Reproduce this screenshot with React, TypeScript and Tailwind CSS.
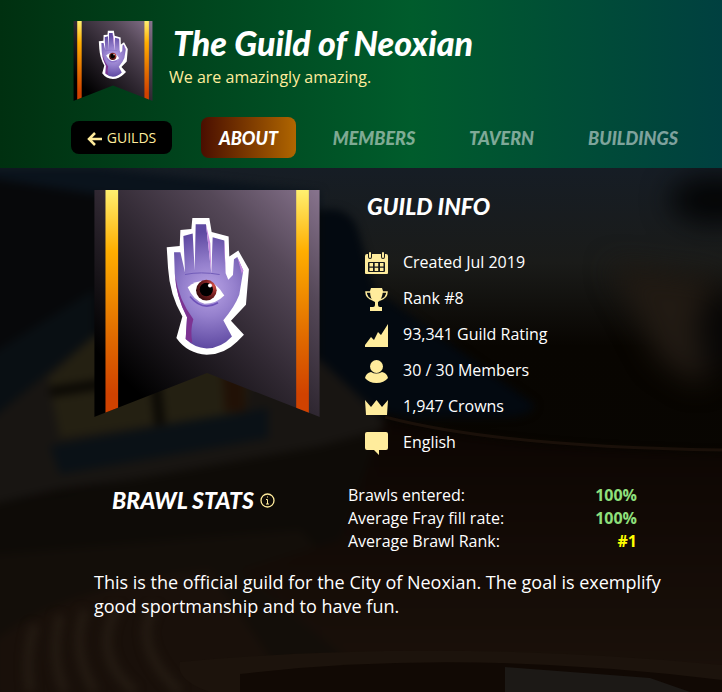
import type { ReactNode } from 'react';

const tabs = [
  { label: 'MEMBERS', width: 'w-[118px]' },
  { label: 'TAVERN', width: 'w-[99px]' },
  { label: 'BUILDINGS', width: 'w-[126px]' },
];

const stats = [
  { label: 'Brawls entered:', value: '100%', color: 'text-[#8fe07c]' },
  { label: 'Average Fray fill rate:', value: '100%', color: 'text-[#8fe07c]' },
  { label: 'Average Brawl Rank:', value: '#1', color: 'text-[#ffff00]' },
];

const info: { text: string; icon: ReactNode }[] = [
  {
    text: 'Created Jul 2019',
    icon: (
      <>
        <path d="M0 4Q0 2 2 2H3V5Q3 7 5 7T7 5V2H16V5Q16 7 18 7T20 5V2H21Q23 2 23 4V21Q23 22 22 22H1Q0 22 0 21Z" />
        <rect x="4" y="0" width="2" height="6" rx="1" />
        <rect x="17" y="0" width="2" height="6" rx="1" />
        <rect x="3" y="10" width="17" height="10" rx="1" fill="#17191a" />
        <path d="M4.500 11h3.500v3.500H4.500zM9.700 11h3.500v3.500H9.700zM15 11h3.500v3.500H15zM4.500 15.700h3.500v3.300H4.500zM9.700 15.700h3.500v3.300H9.700zM15 15.700h3.500v3.300H15z" />
      </>
    ),
  },
  {
    text: 'Rank #8',
    icon: (
      <>
        <path d="M6 0h11l1 3q-1 9-5 11v3q0 2 2 2h2v4H5v-4h3q2 0 2-2v-3Q5 12 5 3z" />
        <path
          fill="none"
          stroke="currentColor"
          strokeWidth="1.5"
          d="M6 4H1q0 6 7 8M17 4h5q0 6-7 8"
        />
      </>
    ),
  },
  {
    text: '93,341 Guild Rating',
    icon: <path d="M0 23V21L6 13L9 16L13 8L16 11L23 0V23Z" />,
  },
  {
    text: '30 / 30 Members',
    icon: (
      <>
        <circle cx="11.500" cy="6.500" r="6.500" />
        <path d="M0 18Q1 13 6 12Q11 15 17 12Q22 13 23 18Q19 23 11.500 23T0 18Z" />
      </>
    ),
  },
  {
    text: '1,947 Crowns',
    icon: <path d="M0 4L6 11L11.500 4L17 11L23 4L22 19H1Z" />,
  },
  {
    text: 'English',
    icon: <path d="M2 0H21Q23 0 23 2V16Q23 18 21 18H14V23L9 18H2Q0 18 0 16V2Q0 0 2 0Z" />,
  },
];

function Crest({ id, className }: { id: string; className: string }) {
  return (
    <svg viewBox="30 30 678 682" className={className} role="img" aria-label="Guild crest">
      <defs>
        <linearGradient id={`${id}-cloth`} x1="0" y1="1" x2="1" y2="0">
          <stop offset="0.15" stopColor="#000000" />
          <stop offset="0.5" stopColor="#302832" />
          <stop offset="0.75" stopColor="#554858" />
          <stop offset="1" stopColor="#88748e" />
        </linearGradient>
        <linearGradient id={`${id}-gold`} x1="0" y1="0" x2="0" y2="1">
          <stop offset="0" stopColor="#fff070" />
          <stop offset="0.27" stopColor="#ffae00" />
          <stop offset="0.65" stopColor="#e06a00" />
          <stop offset="0.9" stopColor="#d04200" />
        </linearGradient>
        <radialGradient id={`${id}-skin`} gradientUnits="userSpaceOnUse" cx="375" cy="330" r="175">
          <stop offset="0" stopColor="#b9a4e6" />
          <stop offset="0.45" stopColor="#9580cd" />
          <stop offset="1" stopColor="#5f4aa2" />
        </radialGradient>
        <radialGradient id={`${id}-iris`} cx="0.8" cy="0.3" r="0.8">
          <stop offset="0" stopColor="#d9534c" />
          <stop offset="0.5" stopColor="#7c2222" />
          <stop offset="1" stopColor="#3c0d0e" />
        </radialGradient>
        <clipPath id={`${id}-shape`}>
          <path d="M30 30H708V712L369 580L30 712Z" />
        </clipPath>
      </defs>
      <g clipPath={`url(#${id}-shape)`}>
        <rect x="30" y="30" width="678" height="682" fill={`url(#${id}-cloth)`} />
        <rect x="64" y="30" width="38" height="682" fill={`url(#${id}-gold)`} />
        <rect x="637" y="30" width="38" height="682" fill={`url(#${id}-gold)`} />
      </g>
      <path
        fill="#ffffff"
        d="M325 114H376L383 156L434 170L436 230L463 212L495 268L486 375L441 423L480 465L460 485Q420 525 368 525Q310 522 277 475L295 410Q257 345 252 265L248 202L287 198L289 150L322 147Z"
      />
      <path
        fill={`url(#${id}-skin)`}
        d="M270 217H289L303 278L298 168L326 161L332 272L335 133H366L382 280L386 172L421 182L425 280L433 300L447 285L450 238L460 231L478 272L466 345Q452 382 418 421L444 470Q412 505 368 506Q330 504 305 478L309 412Q276 350 272 280Z"
      />
      <path fill="#7d3392" d="M305 478L309 412Q276 350 273 285Q284 360 328 418Q318 450 325 490Q314 486 305 478Z" />
      <path fill="#c98be0" d="M366 133L382 280L379 190ZM421 182L425 280L420 200ZM460 231L478 272L474 282Z" />
      <path fill="none" stroke="#705bb8" strokeWidth="3" d="M303 284Q350 274 407 284" />
      <path fill="none" stroke="#6d50b8" strokeWidth="5" d="M318 350Q355 396 402 369" />
      <path fill="#ffffff" d="M311 322Q335 303 362 303Q397 306 421 347Q396 372 362 372Q328 362 311 322Z" />
      <circle cx="367" cy="331" r="31" fill={`url(#${id}-iris)`} />
      <circle cx="367" cy="329" r="20" fill="#000000" />
      <circle cx="378" cy="317" r="6" fill="#ffffff" />
    </svg>
  );
}

/* Dim tavern interior behind the guild details */
function Backdrop() {
  return (
    <svg
      viewBox="0 168 722 524"
      preserveAspectRatio="xMidYMid slice"
      className="absolute inset-0 h-full w-full"
      aria-hidden="true"
    >
      <defs>
        <linearGradient id="room" x1="0" y1="0" x2="0" y2="1">
          <stop offset="0" stopColor="#161d25" />
          <stop offset="0.18" stopColor="#1a1b19" />
          <stop offset="0.34" stopColor="#080501" />
          <stop offset="1" stopColor="#080603" />
        </linearGradient>
        <linearGradient id="floor" x1="0" y1="0" x2="0" y2="1">
          <stop offset="0" stopColor="#0c0502" />
          <stop offset="1" stopColor="#1c120b" />
        </linearGradient>
        <filter id="soft" colorInterpolationFilters="sRGB">
          <feGaussianBlur stdDeviation="4" />
        </filter>
        <filter id="haze" x="-50%" y="-50%" width="200%" height="200%" colorInterpolationFilters="sRGB">
          <feGaussianBlur stdDeviation="14" />
        </filter>
      </defs>
      <rect y="168" width="722" height="524" fill="url(#room)" />
      <g filter="url(#haze)">
        <ellipse cx="715" cy="200" rx="46" ry="24" fill="#040506" />
        <path d="M610 265L722 280V340L700 385L660 360Z" fill="#211a13" />
        <ellipse cx="722" cy="330" rx="24" ry="40" fill="#080706" />
      </g>
      <g filter="url(#soft)">
        <path d="M-10 178L94 190L320 205V420L-10 430Z" fill="#07080a" />
        <path d="M-10 168H100L320 192V210L94 194L-10 178Z" fill="#0a131c" />
        <path d="M320 210Q350 205 358 230L375 290L535 405Q530 418 500 417L410 418L320 400Z" fill="#030910" />
        <path d="M-10 355L94 290V335L-10 420Z" fill="#090f13" />
        <path d="M-10 420L94 335L320 360L390 425L340 450L60 490L-10 505Z" fill="#181512" />
        <path d="M48 378L96 335L250 370L245 412L60 438Z" fill="#242012" />
        <path d="M222 370H245V412H225Z" fill="#211106" />
        <path d="M50 392L155 376L160 425" fill="none" stroke="#0a0804" strokeWidth="10" />
        <path d="M50 446L268 408V438L60 474Z" fill="#0a1116" />
        <path d="M-10 505L320 446L380 430L500 460V692H-10Z" fill="#0e0b07" />
        <path d="M-10 555L300 530L460 692H-10Z" fill="#130e09" />
        <path d="M385 420Q500 450 732 454V702H400L240 570L340 540Z" fill="url(#floor)" />
        <path d="M-5 640Q70 585 210 570L300 702H-5Z" fill="#19100a" />
      </g>
      <path d="M385 417Q500 447 722 450" fill="none" stroke="#1a1009" strokeWidth="3" />
      <g filter="url(#soft)">
        <path
          d="M30 692Q25 650 35 625M65 692Q50 660 60 615M95 692Q70 650 85 610M135 692Q90 655 118 605M180 692Q130 645 155 605"
          fill="none"
          stroke="#231a12"
          strokeWidth="10"
        />
      </g>
      <path d="M180 662Q440 638 722 665V692H210Q175 680 180 662Z" fill="#1c130c" />
      <path d="M240 674Q460 648 722 680V692H240Z" fill="#110904" />
      <path d="M505 667L650 678L690 692H505Z" fill="#1c1916" />
    </svg>
  );
}

export default function App() {
  return (
    <div className="flex min-h-screen flex-col bg-[#0c0906] font-['Open_Sans',sans-serif] text-white">
      <header className="bg-[linear-gradient(90deg,#003010_0%,#005c2c_57%,#004040_100%)] pt-[21px] pb-[10px] pl-[71px]">
        <div className="flex h-24 items-start gap-4">
          <Crest id="small" className="ml-0.5 h-20 w-20 shrink-0" />
          <div className="pt-1">
            <h1 className="pl-1 font-['Lato',sans-serif] text-[34px] leading-9 font-black italic">
              The Guild of Neoxian
            </h1>
            <p className="text-base leading-8 text-[#ffec9c]">We are amazingly amazing.</p>
          </div>
        </div>
        <nav className="flex h-[41px] items-center">
          <a
            href="#guilds"
            className="mr-[29px] flex h-[33px] w-[101px] shrink-0 items-center justify-center gap-1 rounded-lg bg-black text-sm text-[#ffec9c]"
          >
            <svg viewBox="0 0 16 14" className="mt-0.5 h-3.5 w-4" fill="none" stroke="currentColor" strokeWidth="2.5">
              <path d="M15 7H2M8 1L2 7L8 13" />
            </svg>
            GUILDS
          </a>
          <div className="flex gap-[19px] font-['Lato',sans-serif] text-lg font-black italic">
            <a
              href="#about"
              aria-current="page"
              className="flex h-[41px] w-[95px] items-center justify-center rounded-lg bg-linear-to-r from-[#4a0e00] to-[#b06600]"
            >
              ABOUT
            </a>
            {tabs.map((tab) => (
              <a
                key={tab.label}
                href={`#${tab.label.toLowerCase()}`}
                className={`flex h-[41px] items-center justify-center text-white/50 ${tab.width}`}
              >
                {tab.label}
              </a>
            ))}
          </div>
        </nav>
      </header>

      <main className="relative grow">
        <Backdrop />
        <div className="relative pt-[22px] pr-11 pb-16 pl-[94px]">
          <section className="flex gap-[45px]">
            <Crest id="large" className="h-[227px] w-[226px] shrink-0" />
            <div>
              <h2 className="pl-0.5 font-['Lato',sans-serif] text-[23px] leading-8 font-black italic">GUILD INFO</h2>
              <ul className="mt-[22px]">
                {info.map((row) => (
                  <li key={row.text} className="flex h-9 items-center gap-[15px]">
                    <svg viewBox="0 0 23 23" className="mt-0.5 h-[23px] w-[23px] text-[#ffec9c]" fill="currentColor">
                      {row.icon}
                    </svg>
                    {row.text}
                  </li>
                ))}
              </ul>
            </div>
          </section>

          <section className="mt-6 flex">
            <div className="flex h-8 w-[254px] shrink-0 items-center gap-1.5 pl-[18px]">
              <h2 className="font-['Lato',sans-serif] text-[23px] leading-8 font-black italic">BRAWL STATS</h2>
              <button type="button" aria-label="About brawl stats" className="text-[#ffec9c]">
                <svg viewBox="0 0 15 15" className="h-[15px] w-[15px]" fill="none" stroke="currentColor">
                  <circle cx="7.500" cy="7.500" r="6.500" strokeWidth="1.300" />
                  <path d="M6 6.500H7.500V11M6 11H9M7 4H8" />
                </svg>
              </button>
            </div>
            <table className="w-[289px] leading-[23px]">
              <tbody>
                {stats.map((row) => (
                  <tr key={row.label}>
                    <th scope="row" className="p-0 text-left font-normal">
                      {row.label}
                    </th>
                    <td className={`p-0 text-right font-bold ${row.color}`}>{row.value}</td>
                  </tr>
                ))}
              </tbody>
            </table>
          </section>

          <p className="mt-[17px] text-lg leading-6">
            This is the official guild for the City of Neoxian. The goal is exemplify good sportmanship and to have fun.
          </p>
        </div>
      </main>
    </div>
  );
}
